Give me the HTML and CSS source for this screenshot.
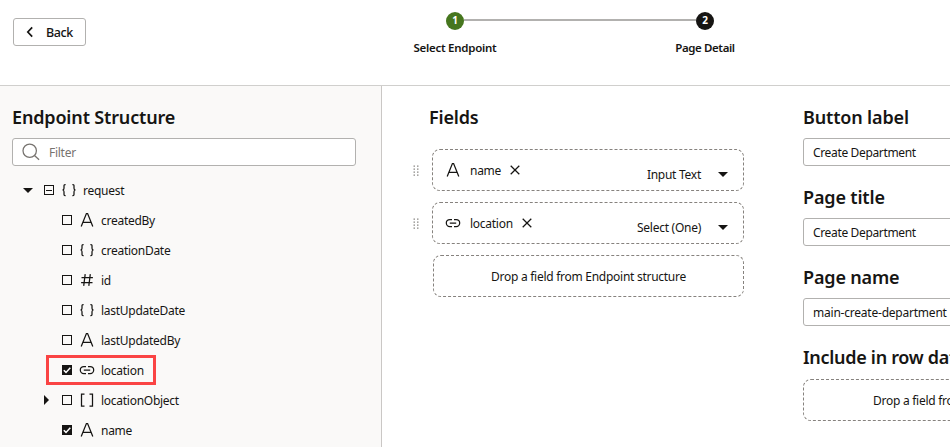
FILE: index.html
```html
<!DOCTYPE html>
<html lang="en">
<head>
<meta charset="utf-8">
<title>Create Department - Page Detail</title>
<link rel="stylesheet" href="styles.css">
</head>
<body>
<svg class="defs" aria-hidden="true">
  <symbol id="letter" viewBox="0 0 16 16"><path d="M2.2 14.4 7.4 1.6h1.2l5.2 12.8M4 10.3h8"/></symbol>
  <symbol id="object" viewBox="0 0 16 16"><path d="M4.6 2.5H4Q3 2.5 3 3.6v2.6Q3 7.9 1.5 8 3 8.1 3 9.8v2.6q0 1.1 1 1.1h.6M11.4 2.5h.6q1 0 1 1.1v2.6q0 1.7 1.5 1.8-1.5.1-1.5 1.8v2.6q0 1.1-1 1.1h-.6"/></symbol>
  <symbol id="number" viewBox="0 0 16 16"><path d="M6.2 2.2 4.7 13.8M11.3 2.2 9.8 13.8M2.5 5.5h11.4M2.1 10.5h11.4"/></symbol>
  <symbol id="array" viewBox="0 0 16 16"><path d="M5.5 2h-3v12h3M10.5 2h3v12h-3"/></symbol>
  <symbol id="link" viewBox="0 0 16 16"><path d="M7 4.5H4.8a3.5 3.5 0 0 0 0 7H7M9 4.5h2.2a3.5 3.5 0 0 1 0 7H9M4.8 8h6.4"/></symbol>
  <symbol id="close" viewBox="0 0 10 10"><path d="m.7.7 8.6 8.6M9.3.7.7 9.3"/></symbol>
  <symbol id="check" viewBox="0 0 10 10"><path d="m1.8 5.2 2.2 2.2 4.3-4.7"/></symbol>
  <symbol id="grip" viewBox="0 0 6 11"><path d="M.5 1H2M4 1h1.5M.5 4H2M4 4h1.5M.5 7H2M4 7h1.5M.5 10H2M4 10h1.5"/></symbol>
</svg>
<header class="topbar">
  <button class="back"><svg class="chevron" viewBox="0 0 8 12"><path d="M6.2 1.3 1.8 6l4.4 4.7"/></svg>Back</button>
  <ol class="train">
    <li class="step done"><span class="dot">1</span><span class="step-label">Select Endpoint</span></li>
    <li class="step current"><span class="dot">2</span><span class="step-label">Page Detail</span></li>
  </ol>
</header>
<main class="content">
  <aside class="structure">
    <h2>Endpoint Structure</h2>
    <div class="filter"><svg class="search" viewBox="0 0 18 18"><circle cx="7.7" cy="7.7" r="6.7"/><path d="m12.5 12.5 4.6 4.3"/></svg>Filter</div>
    <ul class="tree">
      <li class="node root"><span class="arrow down"></span><span class="box mixed"></span><svg class="icon"><use href="#object"/></svg><span class="label">request</span></li>
      <li class="node"><span class="arrow"></span><span class="box"></span><svg class="icon"><use href="#letter"/></svg><span class="label">createdBy</span></li>
      <li class="node"><span class="arrow"></span><span class="box"></span><svg class="icon"><use href="#object"/></svg><span class="label">creationDate</span></li>
      <li class="node"><span class="arrow"></span><span class="box"></span><svg class="icon"><use href="#number"/></svg><span class="label">id</span></li>
      <li class="node"><span class="arrow"></span><span class="box"></span><svg class="icon"><use href="#object"/></svg><span class="label">lastUpdateDate</span></li>
      <li class="node"><span class="arrow"></span><span class="box"></span><svg class="icon"><use href="#letter"/></svg><span class="label">lastUpdatedBy</span></li>
      <li class="node marked"><span class="arrow"></span><span class="box checked"><svg><use href="#check"/></svg></span><svg class="icon"><use href="#link"/></svg><span class="label">location</span></li>
      <li class="node"><span class="arrow right"></span><span class="box"></span><svg class="icon"><use href="#array"/></svg><span class="label">locationObject</span></li>
      <li class="node"><span class="arrow"></span><span class="box checked"><svg><use href="#check"/></svg></span><svg class="icon"><use href="#letter"/></svg><span class="label">name</span></li>
    </ul>
  </aside>
  <section class="fields">
    <h2>Fields</h2>
    <div class="field-row"><svg class="grip"><use href="#grip"/></svg>
      <div class="card"><svg class="icon"><use href="#letter"/></svg><span class="field-name">name</span><svg class="close"><use href="#close"/></svg><span class="kind">Input Text</span><span class="arrow down"></span></div></div>
    <div class="field-row"><svg class="grip"><use href="#grip"/></svg>
      <div class="card"><svg class="icon"><use href="#link"/></svg><span class="field-name">location</span><svg class="close"><use href="#close"/></svg><span class="kind">Select (One)</span><span class="arrow down"></span></div></div>
    <div class="card drop">Drop a field from Endpoint structure</div>
  </section>
  <section class="details">
    <h2>Button label</h2><div class="input">Create Department</div>
    <h2>Page title</h2><div class="input">Create Department</div>
    <h2>Page name</h2><div class="input slug">main-create-department</div>
    <h2 class="row-data">Include in row data</h2><div class="card drop">Drop a field from Endpoint structure</div>
  </section>
</main>
</body>
</html>
```
FILE: styles.css
```css
*, *::before, *::after { box-sizing: border-box; }
body { margin: 0; height: 447px; overflow: hidden; background: #fff; color: #161513; font: 12px/16px "Noto Sans", sans-serif; letter-spacing: -.27px; }
ul, ol { list-style: none; margin: 0; padding: 0; }
svg { fill: none; stroke: currentColor; stroke-width: 1.25; flex: none; }
.defs { display: none; }
h2 { margin: 0; font-size: 18px; line-height: 24px; font-weight: 600; white-space: nowrap; letter-spacing: -.16px; }

.topbar { height: 86px; border-bottom: 1px solid #d0cfcd; display: flex; align-items: flex-start; }
.back { margin: 18px 0 0 13px; width: 73px; height: 28px; padding: 1px 0 0 12px; display: flex; align-items: center; border: 1px solid #b2b1af; border-radius: 3px; background: #fff; color: inherit; font: 500 12.5px/16px "Noto Sans", sans-serif; letter-spacing: -.4px; }
.chevron { width: 8px; height: 12px; margin: -2px 12px 0 0; stroke-width: 1.7; }
.train { display: flex; margin: 12px 0 0 244px; }
.step { width: 250px; display: flex; flex-direction: column; align-items: center; position: relative; }
.step.done::after { content: ""; position: absolute; left: 134px; top: 7px; width: 232px; height: 2px; background: #b2b1af; }
.dot { width: 18px; height: 18px; border-radius: 50%; background: #161513; color: #fff; font-weight: 700; font-size: 10px; line-height: 17px; text-align: center; letter-spacing: 0; }
.done .dot { background: #46761e; }
.step-label { margin-top: 10px; font-weight: 600; font-size: 11.5px; white-space: nowrap; }
.current .step-label { letter-spacing: -.4px; }

.content { display: flex; height: 361px; overflow: hidden; }
.structure { width: 382px; flex: none; padding: 19px 0 0 12px; background: #faf9f8; border-right: 1px solid #cac7c5; }
.filter { display: flex; align-items: center; width: 344px; height: 28px; margin-top: 9px; padding: 1px 0 0 9px; background: #fff; border: 1px solid #b2b1af; border-radius: 3px; color: #77736f; }
.search { width: 18px; height: 18px; margin: -2px 9px 0 0; }
.tree { padding-top: 9px; }
.node { display: flex; align-items: center; height: 30px; margin-left: 28px; position: relative; white-space: nowrap; }
.node.root { margin-left: 10px; }
.node .icon { margin-right: 6px; }
.label { padding-top: 2px; }
.icon { width: 16px; height: 16px; }
.arrow { width: 12px; height: 10px; margin-right: 10px; flex: none; }
.arrow::before { content: ""; display: block; width: 0; }
.down::before { margin: 3px 0 0 1px; border: 5px solid transparent; border-top: 5px solid #161513; border-bottom: 0; }
.right::before { margin: 0 0 0 4px; border: 5px solid transparent; border-left: 5px solid #161513; border-right: 0; }
.box { width: 10px; height: 10px; border: 1px solid #161513; margin-right: 7px; flex: none; }
.mixed::before { content: ""; display: block; width: 6px; height: 1px; margin: 3.5px 0 0 1px; background: #161513; }
.checked { background: #161513; color: #fff; }
.checked svg { display: block; width: 10px; height: 10px; margin: -1px; stroke-width: 1.5; }
.marked::after { content: ""; position: absolute; left: 6px; top: 0; width: 110px; height: 30px; border: 3px solid #fa4444; }

.fields { width: 421px; flex: none; padding: 19px 0 0 31px; }
.fields h2 { margin: 0 0 20px 16px; }
.field-row { display: flex; align-items: center; margin-bottom: 11px; }
.grip { width: 6px; height: 11px; margin-right: 13px; color: #8b8985; }
.card { width: 312px; height: 42px; padding: 0 14px 0 11px; display: flex; align-items: center; border: 1px dashed #86827e; border-radius: 8px; white-space: nowrap; }
.card .icon { margin: -1px 10px 0 1px; }
.card .icon + .field-name { margin-left: -1px; }
.field-name { padding-top: 2px; }
.close { width: 10px; height: 10px; margin: -1px 0 0 9px; }
.kind { margin: 9px 16px 0 auto; }
.card .arrow { margin: 7px 0 0; }
.card.drop { justify-content: center; padding: 2px 0 0; }
.fields .drop { margin-left: 20px; width: 311px; }

.details { width: 335px; flex: none; padding-top: 19px; }
.input { height: 28px; margin: 9px 0 19px; padding: 6px 9px; border: 1px solid #b2b1af; border-radius: 3px; letter-spacing: -.35px; }
.input + h2 { margin-top: 19px; }
.slug { letter-spacing: -.22px; }
.row-data { letter-spacing: -.3px; }
.details .drop { width: 335px; margin-top: 10px; }
```
